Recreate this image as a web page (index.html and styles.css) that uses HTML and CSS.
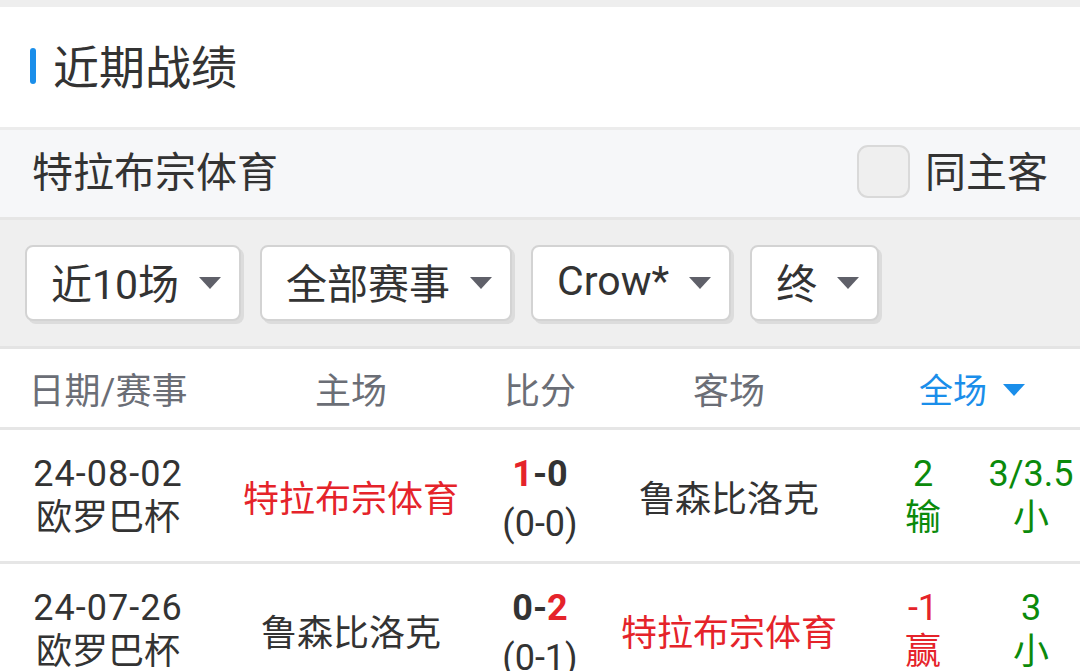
FILE: index.html
```html
<!DOCTYPE HTML>
<html>
<head>
  <title>近期战绩</title>
  <meta name="viewport" content="width=device-width, initial-scale=1">
  <link rel="stylesheet" href="styles.css">
</head>
<body>
  <div class="top-gap"></div>
  <div class="title-bar">
    <span class="mark"></span>
    <h2>近期战绩</h2>
  </div>
  <div class="team-bar">
    <span class="team-name">特拉布宗体育</span>
    <label class="same-side"><span class="check"></span>同主客</label>
  </div>
  <div class="filters">
    <div class="select">近10场<span class="caret"></span></div>
    <div class="select">全部赛事<span class="caret"></span></div>
    <div class="select">Crow*<span class="caret"></span></div>
    <div class="select">终<span class="caret"></span></div>
  </div>
  <div class="records">
    <div class="row head">
      <div>日期/赛事</div>
      <div>主场</div>
      <div>比分</div>
      <div>客场</div>
      <div class="full">全场<span class="caret blue"></span></div>
    </div>
    <div class="row">
      <div class="stack"><span class="date">24-08-02</span><span>欧罗巴杯</span></div>
      <div class="red">特拉布宗体育</div>
      <div class="stack result"><span class="score"><b class="red">1</b>-0</span><span>(0-0)</span></div>
      <div>鲁森比洛克</div>
      <div class="stack odds green"><span>2</span><span>输</span></div>
      <div class="stack odds green"><span>3/3.5</span><span>小</span></div>
    </div>
    <div class="row">
      <div class="stack"><span class="date">24-07-26</span><span>欧罗巴杯</span></div>
      <div>鲁森比洛克</div>
      <div class="stack result"><span class="score">0-<b class="red">2</b></span><span>(0-1)</span></div>
      <div class="red">特拉布宗体育</div>
      <div class="stack odds red"><span>-1</span><span>赢</span></div>
      <div class="stack odds green"><span>3</span><span>小</span></div>
    </div>
  </div>
</body>
</html>
```

FILE: styles.css
```css
html {
  font-family: Roboto, "Noto Sans CJK SC", sans-serif;
  color: #333333;
}
body {
  margin: 0;
  width: 1080px;
  overflow: hidden;
}
.top-gap {
  height: 7px;
  background-color: #eeeeee;
}
.title-bar {
  height: 114px;
  display: flex;
  align-items: center;
  padding: 0 0 6px 30px;
  background-color: #ffffff;
  border-bottom: 3px solid #ececec;
}
.mark {
  width: 6px;
  height: 36px;
  border-radius: 3px;
  background-color: #1a8eea;
  margin: 4px 17px 0 0;
}
.title-bar h2 {
  margin: 0;
  font-size: 46px;
  font-weight: normal;
  color: #333333;
}
.team-bar {
  height: 78px;
  display: flex;
  align-items: center;
  justify-content: space-between;
  padding: 0 32px 9px 32px;
  background-color: #f6f7f9;
  border-bottom: 3px solid #e6e6e6;
  font-size: 41px;
}
.same-side {
  display: flex;
  align-items: center;
  gap: 15px;
}
.check {
  width: 49px;
  height: 49px;
  margin-top: 4px;
  border: 2px solid #d9d9d9;
  border-radius: 11px;
  background-color: #efefef;
}
.filters {
  display: flex;
  gap: 19px;
  padding: 25px 25px;
  background-color: #efefef;
  border-bottom: 3px solid #e4e4e4;
}
.select {
  height: 68px;
  display: flex;
  align-items: center;
  padding: 0 18px 4px 24px;
  border: 2px solid #d3d3d3;
  border-radius: 8px;
  background-color: #ffffff;
  box-shadow: 3px 3px 0 #dcdcdc;
  font-size: 41px;
}
.caret {
  width: 0;
  height: 0;
  margin: 4px 0 0 20px;
  border-left: 11.5px solid transparent;
  border-right: 11.5px solid transparent;
  border-top: 12px solid #5f6069;
}
.caret.blue {
  border-top-color: #1a8eea;
  margin-left: 16px;
}
.row {
  display: grid;
  grid-template-columns: 216px 270px 108px 270px 108px 108px;
  align-items: center;
  text-align: center;
  font-size: 36px;
  background-color: #ffffff;
  border-bottom: 3px solid #e6e6e6;
  height: 131px;
}
.row.head {
  height: 78px;
  padding-bottom: 0;
  color: #6b6e76;
}
.head .full {
  grid-column: 5 / 7;
  color: #1a8eea;
  font-size: 34px;
  display: flex;
  align-items: center;
  justify-content: center;
}
.stack {
  display: flex;
  flex-direction: column;
  line-height: 44px;
}
.result {
  line-height: 50px;
  padding-top: 6px;
}
.date {
  letter-spacing: 1px;
}
.score {
  font-weight: bold;
}
.score b {
  font-weight: bold;
}
.odds {
  padding-left: 10px;
}
.red {
  color: #e5232a;
}
.green {
  color: #0b8a0b;
}
```
